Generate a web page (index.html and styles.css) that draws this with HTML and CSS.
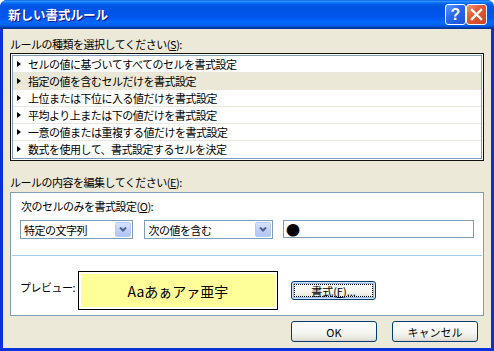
FILE: index.html
```html
<!DOCTYPE html>
<html lang="ja">
<head>
  <meta charset="UTF-8">
  <title>新しい書式ルール</title>
  <link rel="stylesheet" href="styles.css">
</head>
<body>
  <div class="window">
    <div class="titlebar">
      <span class="title">新しい書式ルール</span>
      <div class="caption-buttons">
        <span class="cap-btn help">?</span>
        <span class="cap-btn close">
          <svg width="13" height="13" viewBox="0 0 13 13"><path d="M2 2 L11 11 M11 2 L2 11" stroke="#fff" stroke-width="2.4" stroke-linecap="square"/></svg>
        </span>
      </div>
    </div>

    <div class="client">
      <div class="label">ルールの種類を選択してください(<u>S</u>):</div>
      <div class="rule-list">
        <div class="rule-list-inner">
          <div class="rule"><span class="arrow"></span>セルの値に基づいてすべてのセルを書式設定</div>
          <div class="rule selected"><span class="arrow"></span>指定の値を含むセルだけを書式設定</div>
          <div class="rule"><span class="arrow"></span>上位または下位に入る値だけを書式設定</div>
          <div class="rule"><span class="arrow"></span>平均より上または下の値だけを書式設定</div>
          <div class="rule"><span class="arrow"></span>一意の値または重複する値だけを書式設定</div>
          <div class="rule"><span class="arrow"></span>数式を使用して、書式設定するセルを決定</div>
        </div>
      </div>

      <div class="label label-edit">ルールの内容を編集してください(<u>E</u>):</div>
      <div class="rule-edit">
        <div class="edit-top">
          <div class="label">次のセルのみを書式設定(<u>O</u>):</div>
          <div class="controls">
            <div class="combo combo-type">
              <span class="combo-text">特定の文字列</span>
              <span class="combo-btn"><svg width="8" height="5" viewBox="0 0 8 5"><path d="M1 0.5 L4 3.5 L7 0.5" fill="none" stroke="#4d6185" stroke-width="2"/></svg></span>
            </div>
            <div class="combo combo-op">
              <span class="combo-text">次の値を含む</span>
              <span class="combo-btn"><svg width="8" height="5" viewBox="0 0 8 5"><path d="M1 0.5 L4 3.5 L7 0.5" fill="none" stroke="#4d6185" stroke-width="2"/></svg></span>
            </div>
            <div class="textbox">●</div>
          </div>
        </div>
        <div class="edit-bottom">
          <span class="preview-label">プレビュー:</span>
          <div class="preview"><div class="preview-fill">Aaあぁアァ亜宇</div></div>
          <button class="btn btn-format">書式(<u>F</u>)...</button>
        </div>
      </div>

      <div class="footer">
        <button class="btn">OK</button>
        <button class="btn">キャンセル</button>
      </div>
    </div>
  </div>
</body>
</html>
```

FILE: styles.css
```css
body {
  margin: 0;
  background: #fff;
  font-family: "Noto Sans CJK JP", "Liberation Sans", sans-serif;
  font-size: 11px;
  color: #000;
}

.window {
  width: 494px;
  height: 351px;
  background: #0831d9;
  border-radius: 7px 7px 0 0;
  display: flex;
  flex-direction: column;
  overflow: hidden;
}

.titlebar {
  height: 29px;
  flex: none;
  display: flex;
  align-items: center;
  justify-content: space-between;
  padding: 0 7px 0 8px;
  background: linear-gradient(180deg, #0058ee 0%, #3593ff 4%, #288eff 6%, #127dff 8%, #036ffc 10%, #0262ee 14%, #0057e5 20%, #0054e3 24%, #0055eb 56%, #005bf5 66%, #026afe 76%, #0062ef 86%, #0052d6 92%, #0040ab 94%, #003092 100%);
}

.title {
  color: #fff;
  font-weight: bold;
  font-size: 12.5px;
  text-shadow: 1px 1px #0f1089;
}

.caption-buttons {
  display: flex;
}

.cap-btn {
  width: 19px;
  height: 19px;
  border: 1px solid #fff;
  border-radius: 3px;
  display: flex;
  align-items: center;
  justify-content: center;
  color: #fff;
  font-family: "Liberation Sans", sans-serif;
  font-weight: bold;
  font-size: 16px;
}

.help {
  background: linear-gradient(135deg, #5b9bff 0%, #2866eb 45%, #1c55d8 100%);
}

.close {
  background: linear-gradient(135deg, #f09a7a 0%, #e05a36 40%, #cc4620 100%);
}

.client {
  flex: 1;
  margin: 0 3px 3px;
  background: #ece9d8;
  padding: 8px 7px 6px;
  display: flex;
  flex-direction: column;
}

.label {
  line-height: 14px;
  letter-spacing: -0.5px;
}

.rule-list {
  margin-top: 2px;
  border: 1px solid #111;
  padding: 1px;
  background: #fff;
}

.rule-list-inner {
  border: 1px solid #7f9db9;
}

.rule {
  height: 16px;
  border-bottom: 1px solid #e9e7dc;
  padding-left: 4px;
  display: flex;
  align-items: center;
  letter-spacing: -0.5px;
  line-height: 16px;
}

.rule:last-child {
  border-bottom-color: #fff;
}

.rule.selected {
  background: #ebe8d7;
  border-bottom-color: #ebe8d7;
}

.arrow {
  width: 0;
  height: 0;
  border-left: 4px solid #000;
  border-top: 3px solid transparent;
  border-bottom: 3px solid transparent;
  margin-right: 7px;
}

.label-edit {
  margin-top: 14px;
}

.rule-edit {
  margin-top: 3px;
  background: #fff;
  border: 1px solid #7f9db9;
}

.edit-top {
  padding: 6px 8px 16px 9px;
  border-bottom: 1px solid #a5c8ef;
  margin: 0 1px;
}

.controls {
  margin-top: 7px;
  margin-left: -1px;
  display: flex;
  align-items: flex-start;
}

.combo {
  height: 17px;
  border: 1px solid #7f9db9;
  display: flex;
  align-items: center;
  justify-content: space-between;
  padding: 0 1px 0 3px;
}

.combo-text {
  letter-spacing: -0.5px;
}

.combo-type {
  width: 108px;
}

.combo-op {
  width: 123px;
  margin-left: 11px;
}

.combo-btn {
  width: 14px;
  height: 13px;
  border: 1px solid #b8caf5;
  border-radius: 2px;
  background: linear-gradient(180deg, #d6e2fe 0%, #bccffa 60%, #b1c6f6 100%);
  display: flex;
  align-items: center;
  justify-content: center;
}

.textbox {
  width: 188px;
  height: 16px;
  margin-left: 10px;
  border: 1px solid #7f9db9;
  padding-left: 2px;
  font-size: 14px;
  line-height: 16px;
}

.edit-bottom {
  height: 59px;
  padding: 0 0 0 9px;
  display: flex;
  align-items: center;
}

.preview-label {
  width: 58px;
  letter-spacing: -0.5px;
  margin-top: 2px;
}

.preview {
  width: 200px;
  height: 39px;
  box-sizing: border-box;
  border: 1px solid #000;
  margin-top: 10px;
  padding: 2px;
}

.preview-fill {
  height: 100%;
  background: #ffff99;
  display: flex;
  align-items: center;
  justify-content: center;
  font-size: 14px;
}

.btn {
  width: 86px;
  height: 21px;
  padding: 0;
  border: 1px solid #003c74;
  border-radius: 3px;
  background: linear-gradient(180deg, #ffffff 0%, #f4f4f0 60%, #e6e4da 90%, #d6d0c5 100%);
  font-family: "Noto Sans CJK JP", sans-serif;
  font-size: 11px;
  color: #000;
}

.btn-format {
  width: 85px;
  height: 19px;
  margin-left: 13px;
  margin-top: 10px;
  box-shadow: inset 0 0 0 1px #cee7ff, inset 0 0 0 2px #98b8ea;
  outline: 1px dotted #000;
  outline-offset: -4px;
}

.footer {
  margin-top: 5px;
  display: flex;
  justify-content: flex-end;
  gap: 15px;
  padding-right: 6px;
}
```
